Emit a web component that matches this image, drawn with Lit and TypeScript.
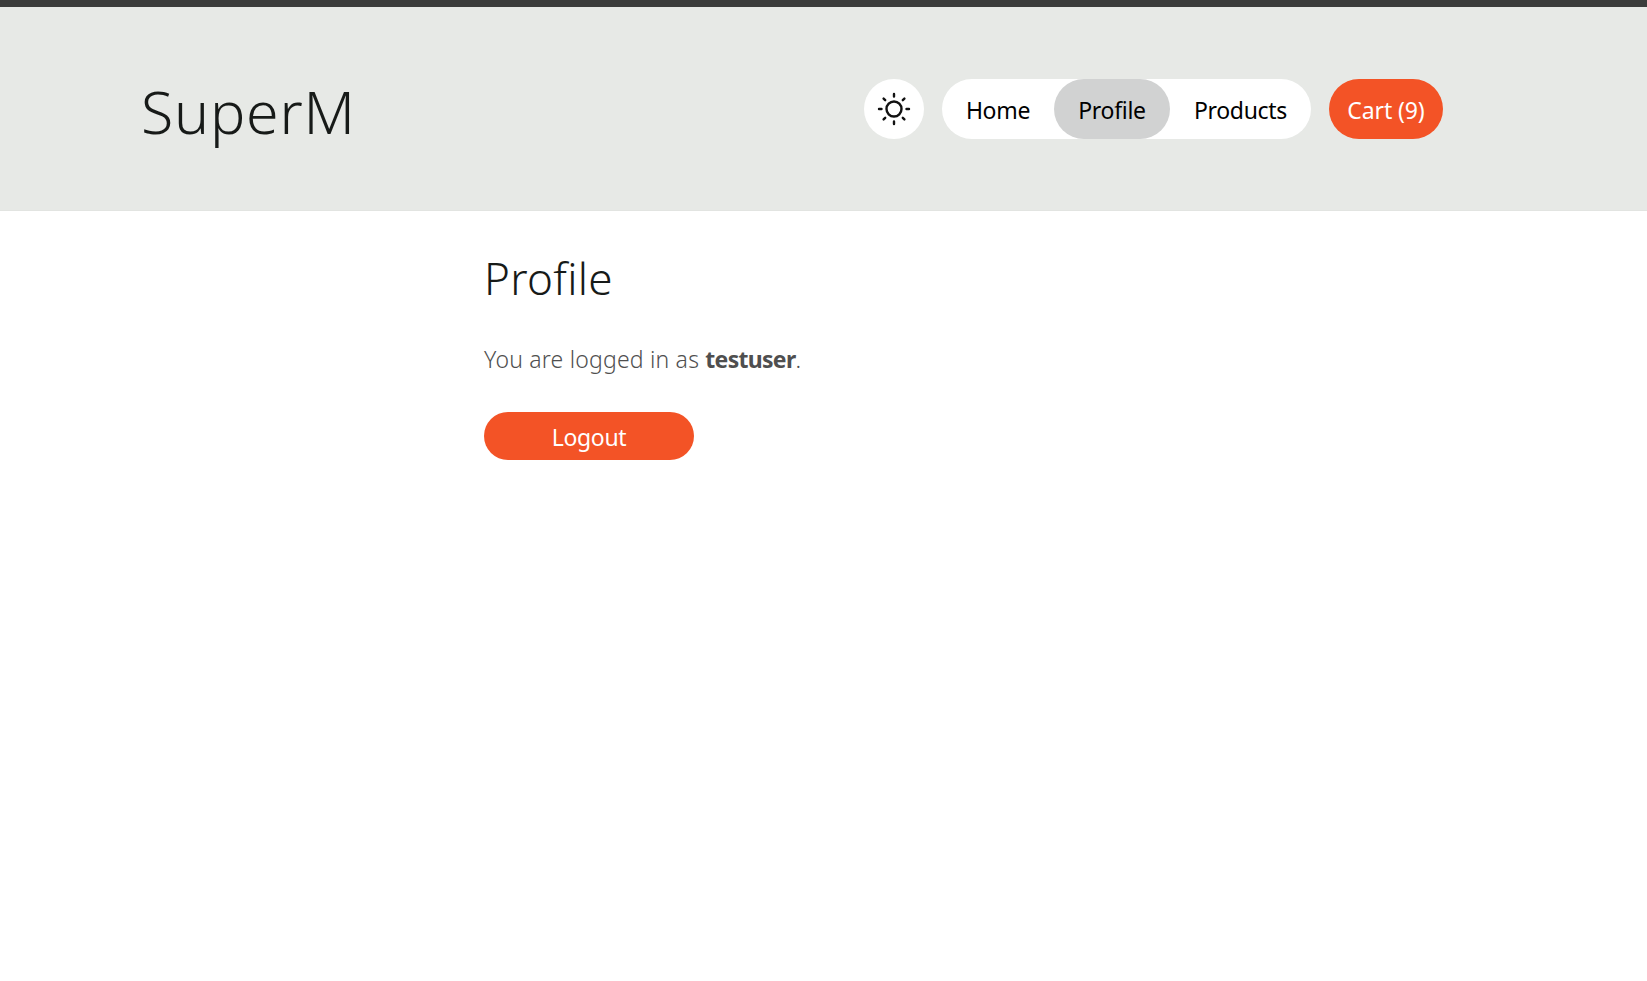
import { LitElement, html, css } from 'lit';
import { customElement } from 'lit/decorators.js';

@customElement('app-root')
export class AppRoot extends LitElement {
  static styles = css`
    :host {
      display: block;
      min-height: 981px;
      background: #fff;
      font-family: 'Noto Sans', 'Open Sans', sans-serif;
      color: #171a18;
    }
    .topbar {
      height: 7px;
      background: #3b3c3b;
    }
    header {
      height: 204px;
      box-sizing: border-box;
      background: #e7e9e6;
      border-bottom: 1px solid #e2e4e1;
      display: flex;
      align-items: center;
      justify-content: space-between;
      padding: 0 204px 0 141px;
    }
    .logo {
      font-size: 59px;
      font-weight: 300;
      line-height: 80px;
      letter-spacing: 0.8px;
      margin-top: 5px;
    }
    .actions {
      display: flex;
      gap: 18px;
    }
    .theme {
      width: 60px;
      height: 60px;
      border-radius: 50%;
      background: #fff;
      display: flex;
      align-items: center;
      justify-content: center;
    }
    .nav {
      display: flex;
      width: 369px;
      height: 60px;
      border-radius: 30px;
      background: #fff;
    }
    .nav a,
    .cart {
      display: flex;
      align-items: center;
      justify-content: center;
      height: 60px;
      border-radius: 30px;
      font-size: 23px;
      letter-spacing: -0.3px;
      color: #000;
      padding-top: 2px;
      box-sizing: border-box;
    }
    .nav .home { width: 112px; }
    .nav .profile { width: 116px; background: #d1d2d2; }
    .nav .products { width: 141px; }
    .cart {
      width: 114px;
      background: #f35326;
      color: #fff;
    }
    .cart { letter-spacing: -0.1px; }
    main {
      padding: 37px 0 0 484px;
    }
    h1 {
      margin: 0;
      font-size: 44px;
      font-weight: 300;
      line-height: 60px;
      letter-spacing: 0.3px;
    }
    p {
      margin: 35px 0 0;
      font-size: 23px;
      font-weight: 300;
      line-height: 32px;
      letter-spacing: 0.2px;
      color: #4f4f4f;
    }
    p b { font-weight: 700; letter-spacing: -0.7px; }
    .logout {
      margin-top: 37px;
      width: 210px;
      height: 48px;
      border-radius: 24px;
      background: #f35326;
      color: #fff;
      font-size: 23px;
      letter-spacing: -0.3px;
      padding-top: 2px;
      box-sizing: border-box;
      display: flex;
      align-items: center;
      justify-content: center;
    }
  `;

  render() {
    return html`
      <div class="topbar"></div>
      <header>
        <div class="logo">SuperM</div>
        <div class="actions">
          <div class="theme">
            <svg width="34" height="34" viewBox="0 0 34 34" fill="none" stroke="#111" stroke-width="2.4" stroke-linecap="round">
              <circle cx="17" cy="17" r="7.5" />
              <path d="M17 2v2.5M17 29.5v2.5M2 17h2.5M29.5 17h2.5M6.6 6.6l1.6 1.6M25.8 25.8l1.6 1.6M6.6 27.4l1.6-1.6M25.8 8.2l1.6-1.6" />
            </svg>
          </div>
          <nav class="nav">
            <a class="home">Home</a>
            <a class="profile">Profile</a>
            <a class="products">Products</a>
          </nav>
          <div class="cart">Cart (9)</div>
        </div>
      </header>
      <main>
        <h1>Profile</h1>
        <p>You are logged in as <b>testuser</b>.</p>
        <div class="logout">Logout</div>
      </main>
    `;
  }
}
